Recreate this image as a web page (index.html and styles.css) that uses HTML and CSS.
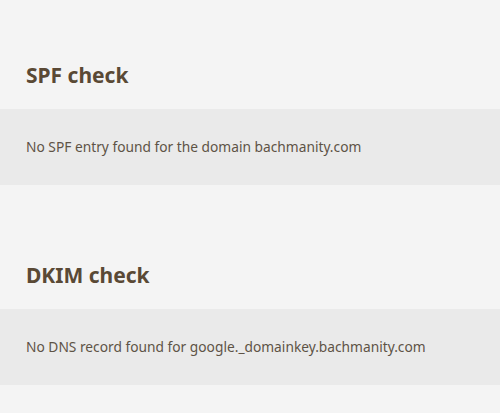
FILE: index.html
```html
<!DOCTYPE html>
<html lang="en">
<head>
<meta charset="utf-8">
<title>Domain checks</title>
<link rel="stylesheet" href="styles.css">
</head>
<body>
<main class="checks">
  <section class="check">
    <h2 class="check-title">SPF check</h2>
    <div class="check-result">No SPF entry found for the domain bachmanity.com</div>
  </section>
  <section class="check">
    <h2 class="check-title">DKIM check</h2>
    <div class="check-result">No DNS record found for google._domainkey.bachmanity.com</div>
  </section>
</main>
</body>
</html>
```
FILE: styles.css
```css
html, body {
  margin: 0;
  padding: 0;
  background: #f4f4f4;
}

body {
  font-family: "Noto Sans", "Open Sans", sans-serif;
}

.checks {
  display: flex;
  flex-direction: column;
  padding-top: 63px;
  gap: 78px;
}

.check {
  display: flex;
  flex-direction: column;
  gap: 22px;
}

.check-title {
  margin: 0;
  padding: 0 26px;
  font-size: 21px;
  line-height: 24px;
  font-weight: 700;
  color: #5a4935;
}

.check-result {
  background: #eaeaea;
  padding: 30px 26px;
  font-size: 13.75px;
  line-height: 16px;
  color: #5e5346;
}
```
